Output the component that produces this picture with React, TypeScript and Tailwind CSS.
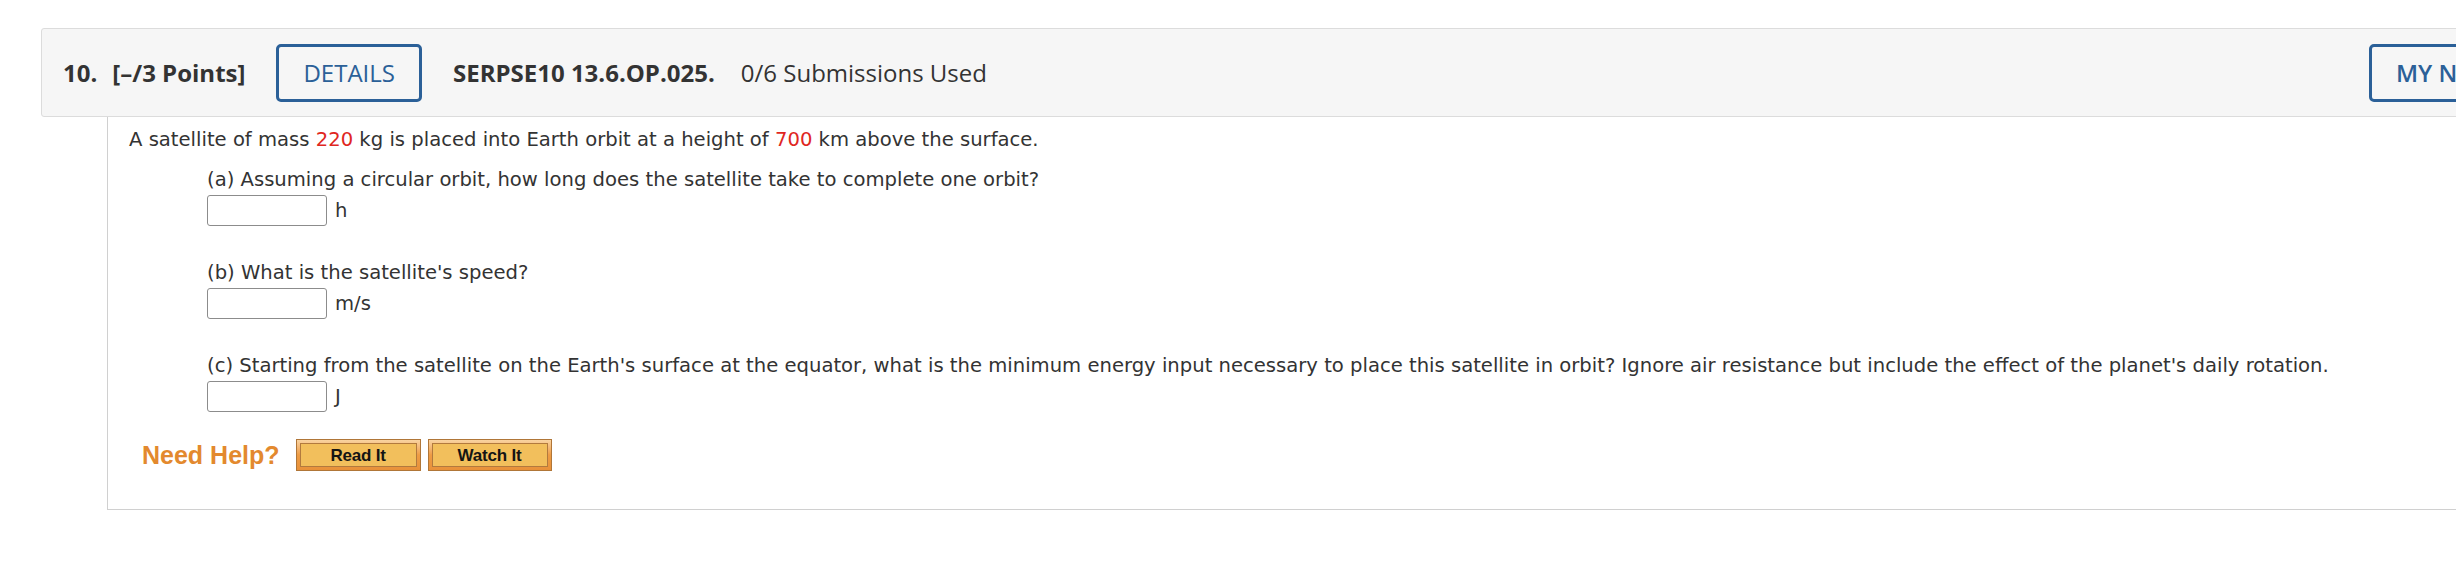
import React from "react";

const body = { fontFamily: '"DejaVu Sans", Verdana, sans-serif' };
const head = { fontFamily: '"Open Sans", "Liberation Sans", sans-serif' };
const arial = { fontFamily: '"Liberation Sans", Arial, sans-serif' };

function AnswerRow({ unit }: { unit: string }) {
  return (
    <div className="mt-[3px] flex items-center">
      <div className="w-[120px] h-[31px] border border-[#8c8c8c] rounded-[3px] bg-white" />
      <span className="ml-[8px]">{unit}</span>
    </div>
  );
}

function HelpButton({ label, w }: { label: string; w: string }) {
  return (
    <div
      className={`${w} h-[32px] border border-[#b07638] bg-gradient-to-b from-[#f9d3a0] via-[#ee9c44] to-[#e8913a] p-[3px]`}
    >
      <div className="h-full border border-[#b27a3e] bg-[#f2bf5c] flex items-center justify-center">
        <span className="text-[17px] font-bold text-[#141414] leading-none tracking-[-0.2px]" style={arial}>
          {label}
        </span>
      </div>
    </div>
  );
}

export default function App() {
  return (
    <div className="w-[2456px] h-[586px] overflow-hidden bg-white">
      <div className="ml-[41px] pt-[28px]">
        <div
          className="w-[2520px] h-[89px] border border-[#dcdcdc] rounded-[3px] bg-[#f6f6f6] flex items-center pl-[21px] pr-[21px] text-[24px] text-[#333333]"
          style={head}
        >
          <span className="font-bold">10.</span>
          <span className="font-bold ml-[15px]">[–/3 Points]</span>
          <div className="ml-[31px] h-[58px] px-[24px] border-[3px] border-[#2b6098] rounded-[5px] flex items-center text-[#2b6098]">
            DETAILS
          </div>
          <span className="font-bold ml-[31px]">SERPSE10 13.6.OP.025.</span>
          <span className="ml-[26px]">0/6 Submissions Used</span>
          <div className="ml-auto w-[170px] h-[58px] px-[24px] border-[3px] border-[#2b6098] rounded-[5px] flex items-center text-[#2b6098] font-semibold whitespace-nowrap">
            MY NOTES
          </div>
        </div>
        <div
          className="ml-[66px] w-[2460px] border-l border-b border-[#d0d0d0] pt-[11px] pb-[38px] pl-[21px] text-[19.6px] leading-[24px] text-[#333333]"
          style={body}
        >
          <p>
            A satellite of mass <span className="text-[#e0271f]">220</span> kg is placed into Earth orbit at a
            height of <span className="text-[#e0271f]">700</span> km above the surface.
          </p>
          <div className="ml-[78px]">
            <p className="mt-[16px]">(a) Assuming a circular orbit, how long does the satellite take to complete one orbit?</p>
            <AnswerRow unit="h" />
            <p className="mt-[35px]">(b) What is the satellite's speed?</p>
            <AnswerRow unit="m/s" />
            <p className="mt-[35px]">
              (c) Starting from the satellite on the Earth's surface at the equator, what is the minimum energy input
              necessary to place this satellite in orbit? Ignore air resistance but include the effect of the planet's
              daily rotation.
            </p>
            <AnswerRow unit="J" />
          </div>
          <div className="mt-[27px] ml-[13px] flex items-center">
            <span className="text-[25px] font-bold text-[#e3892e] leading-none" style={arial}>
              Need Help?
            </span>
            <div className="ml-[16px] flex gap-[7px]">
              <HelpButton label="Read It" w="w-[125px]" />
              <HelpButton label="Watch It" w="w-[124px]" />
            </div>
          </div>
        </div>
      </div>
    </div>
  );
}
